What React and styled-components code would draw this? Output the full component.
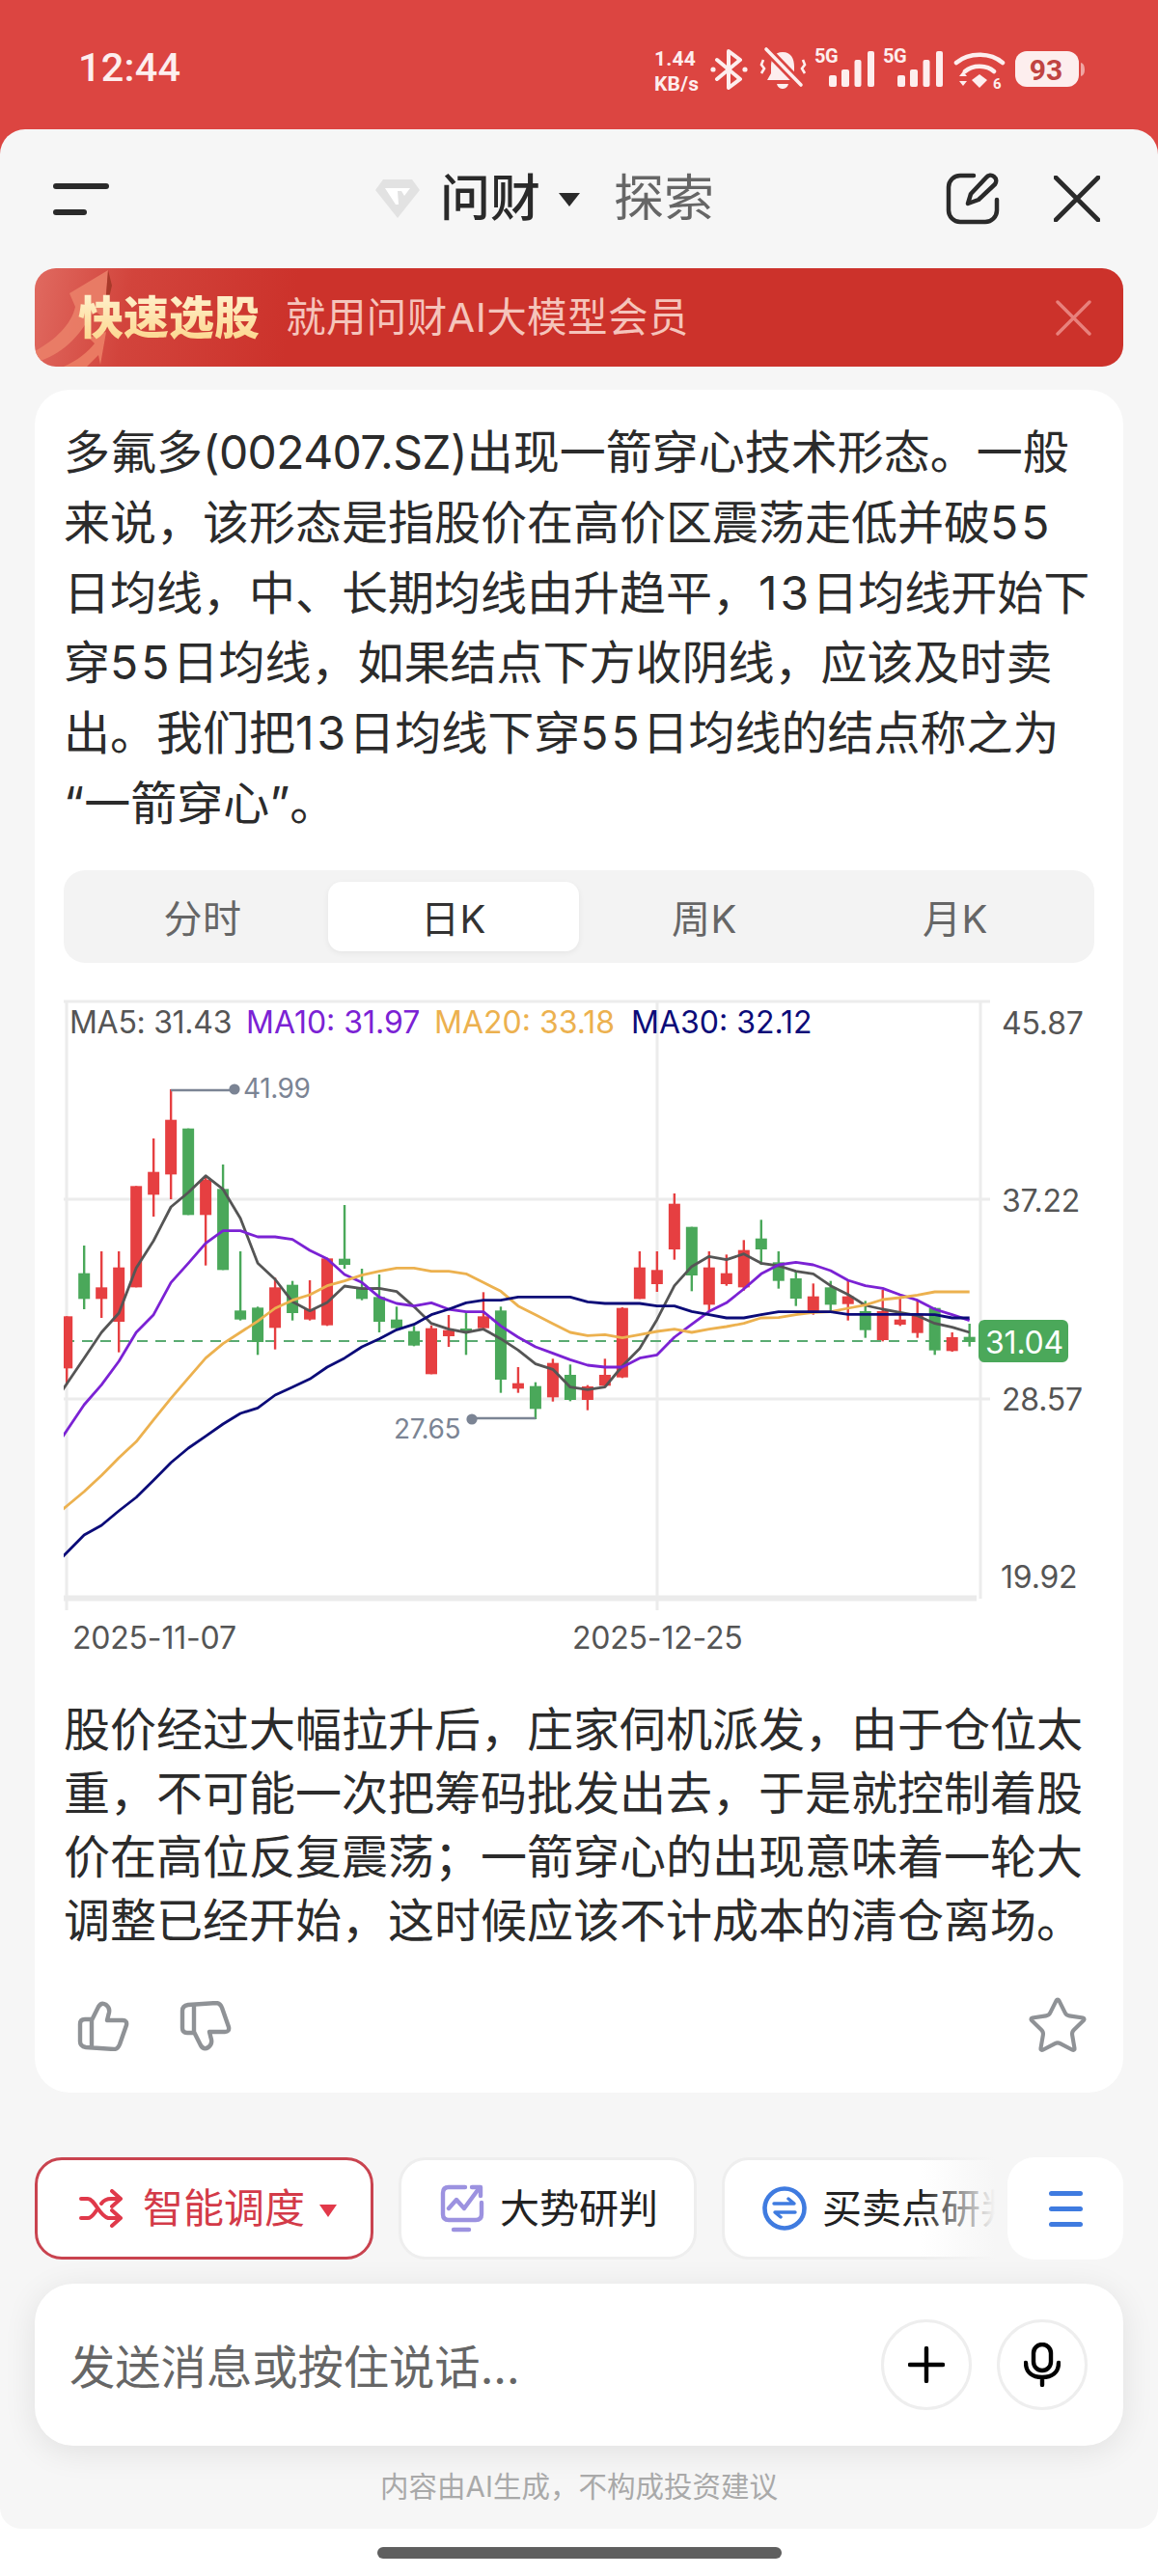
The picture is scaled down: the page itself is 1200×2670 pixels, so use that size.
import React from 'react';
import styled, { createGlobalStyle } from 'styled-components';
import { Star } from 'lucide-react';

const FONT = `Inter, "Noto Sans CJK SC", "Noto Sans", sans-serif`;

const Global = createGlobalStyle`
  html, body { margin: 0; padding: 0; background: #fff; }
  body { font-family: ${FONT}; width: 1200px; height: 2670px; overflow: hidden; }
  * { box-sizing: border-box; }
`;

const Page = styled.div`
  position: relative; width: 1200px; height: 2670px; background: #fff; display: flex; flex-direction: column; overflow: hidden;
`;
const StatusBar = styled.div`
  position: absolute; top: 0; left: 0; width: 1200px; height: 170px; background: #dc4541;
  display: flex; justify-content: space-between; padding: 50px 75px 0 81px; color: #fdeeee;
`;
const Time = styled.div`
  font: 500 41.5px/40px Roboto, sans-serif; letter-spacing: 0.2px;
`;
const StatusRight = styled.div`
  display: flex; align-items: flex-start; height: 44px;
`;
const Speed = styled.div`
  width: 58px; font: 700 21px/26px Roboto, sans-serif; white-space: nowrap; margin-top: -2px; letter-spacing: 0.2px;
`;
const StatusIcon = styled.svg`
  display: block; flex: none; margin-left: ${p => p.$ml || 0}px; overflow: visible;
`;
const Sheet = styled.div`
  position: relative; margin-top: 134px; height: 2487px; background: #f6f6f6; border-radius: 26px 26px 22px 22px;
  display: flex; flex-direction: column; overflow: hidden;
`;
const Header = styled.div`
  height: 144px; flex: none; display: flex; align-items: center; padding: 0 60px 0 55px;
`;
const Burger = styled.div`
  width: 334px; display: flex; flex-direction: column; gap: 21px;
`;
const BurgerBar = styled.span`
  display: block; height: 6px; border-radius: 3px; background: #2a2a2a; width: ${p => p.$w}px;
`;
const Brand = styled.div`
  display: flex; align-items: center;
`;
const BrandName = styled.span`
  font-size: 52px; line-height: 60px; font-weight: 500; color: #2a2a2a; margin-left: 21px;
`;
const BrandCaret = styled.span`
  width: 0; height: 0; margin: 2px 0 0 19px; border-left: 11px solid transparent; border-right: 11px solid transparent; border-top: 14px solid #2a2a2a;
`;
const Explore = styled.span`
  font-size: 52px; line-height: 60px; color: #666; margin-left: 35px;
`;
const HeaderActions = styled.div`
  margin-left: auto; display: flex; align-items: center; gap: 56px;
`;
const Banner = styled.div`
  position: relative; flex: none; margin: 0 36px; height: 102px; border-radius: 22px; overflow: hidden;
  display: flex; align-items: center; padding: 0 33px 0 45px;
  background: linear-gradient(100deg, #e06a60 0, #d2443c 9%, #cc322b 24%, #cc322b 100%);
`;
const BannerArt = styled.svg`
  position: absolute; left: 0; top: 0;
`;
const BannerTitle = styled.span`
  position: relative; font-size: 47px; line-height: 60px; font-weight: 900;
  background: linear-gradient(180deg, #fff3d2, #fcd488); -webkit-background-clip: text; background-clip: text; color: transparent;
`;
const BannerText = styled.span`
  position: relative; font-size: 41.5px; line-height: 60px; color: #f5c4bb; margin-left: 27px; letter-spacing: 0.4px;
`;
const BannerClose = styled.svg`
  margin-left: auto; display: block;
`;
const Card = styled.div`
  flex: none; margin: 24px 36px 0; height: 1765px; background: #fff; border-radius: 36px; padding: 29px 30px 0;
  display: flex; flex-direction: column;
`;
const Para = styled.div`
  font-size: 48px; line-height: ${p => p.$lh}px; color: #2b2b2b; margin-top: ${p => p.$mt || 0}px;
`;
const Line = styled.span`
  display: block; white-space: nowrap;
`;
const Num = styled.span`
  letter-spacing: ${p => p.$ls ?? 3}px;
`;
const Tabs = styled.div`
  margin-top: 32px; height: 96px; flex: none; width: 1068px; background: #f3f3f3; border-radius: 22px; padding: 12px 14px;
  display: grid; grid-template-columns: repeat(4, 1fr);
`;
const Tab = styled.div`
  display: flex; align-items: center; justify-content: center; border-radius: 14px;
  font-size: 40px; letter-spacing: 0.6px; color: ${p => (p.$active ? '#333' : '#666')};
  background: ${p => (p.$active ? '#fff' : 'transparent')};
  box-shadow: ${p => (p.$active ? '0 2px 6px rgba(0,0,0,.06)' : 'none')};
`;
const ChartSvg = styled.svg`
  display: block; flex: none; margin-left: -30px; width: 1128px; height: 722px;
`;
const ChartText = styled.text`
  font-family: Inter, sans-serif; font-size: ${p => p.$size || 32}px; fill: ${p => p.$fill || '#555'};
  letter-spacing: ${p => p.$ls || 0}px;
`;
const Actions = styled.div`
  margin-top: 48px; display: flex; align-items: center; gap: 52px; padding: 0 5px 0 14px; height: 56px;
`;
const ActionSpacer = styled.div`
  flex: 1;
`;
const ChipRow = styled.div`
  flex: none; position: relative; margin: 67px 36px 0; height: 106px; display: flex;
`;
const Scroller = styled.div`
  position: relative; flex: 1; min-width: 0; display: flex; gap: 26px; overflow: hidden;
  &::after {
    content: ''; position: absolute; right: 0; top: 0; bottom: 0; width: 90px;
    background: linear-gradient(90deg, rgba(246,246,246,0), #f6f6f6 86%);
  }
`;
const Chip = styled.div`
  flex: none; height: 106px; border-radius: 28px; background: #fff; display: flex; align-items: center;
  border: 3px solid ${p => (p.$active ? '#c9434f' : '#eeeeee')};
  width: ${p => p.$w}px; padding-left: ${p => p.$pl}px;
`;
const ChipText = styled.span`
  font-size: ${p => (p.$active ? 42 : 41)}px; line-height: 50px; white-space: nowrap; margin-left: ${p => p.$ml}px; color: ${p => (p.$active ? '#d33a48' : '#222')};
`;
const ChipCaret = styled.span`
  width: 0; height: 0; margin: 4px 0 0 15px; border-left: 9px solid transparent; border-right: 9px solid transparent; border-top: 13px solid #e2394a;
`;
const MenuChip = styled.div`
  flex: none; width: 120px; height: 106px; border-radius: 28px; background: #fff; display: flex; flex-direction: column;
  align-items: center; justify-content: center; gap: 11px;
`;
const MenuBar = styled.span`
  display: block; width: 35px; height: 5px; border-radius: 3px; background: #3f7be0;
`;
const InputBox = styled.div`
  flex: none; margin: 25px 36px 0; height: 168px; border-radius: 40px; background: #fff;
  box-shadow: 0 6px 34px rgba(0,0,0,.09); display: flex; align-items: center; padding: 0 37px 2px 36px;
`;
const Placeholder = styled.span`
  font-size: 47.3px; color: #666; flex: 1;
`;
const RoundButton = styled.div`
  width: 94px; height: 94px; border-radius: 50%; border: 3px solid #eee; display: flex; align-items: center; justify-content: center;
  margin-left: ${p => p.$ml || 0}px; margin-top: 2px; background: #fff;
`;
const Disclaimer = styled.div`
  flex: none; position: relative; margin-top: 22px; text-align: center; font-size: 29.5px; line-height: 40px; color: #a9a9a9;
`;
const HomeArea = styled.div`
  flex: 1; display: flex; justify-content: center; padding-top: 19px;
`;
const HomeBar = styled.div`
  width: 419px; height: 12px; border-radius: 6px; background: #5f5f5f;
`;

const para2 = [
  '股价经过大幅拉升后，庄家伺机派发，由于仓位太',
  '重，不可能一次把筹码批发出去，于是就控制着股',
  '价在高位反复震荡；一箭穿心的出现意味着一轮大',
  '调整已经开始，这时候应该不计成本的清仓离场。',
];

// candle: [wickTop, bodyTop, bodyBottom, wickBottom, up?] in zoomed y units
const K = [
  [1090,1090,1252,1300,1],[870,956,1036,1068,0],[888,1000,1036,1095,1],[888,938,1107,1202,1],[685,685,1000,1000,1],
  [537,641,712,780,1],[384,479,649,726,1],[506,506,775,775,0],[655,665,775,932,1],[618,694,946,946,0],
  [888,1072,1100,1103,0],[1060,1063,1170,1210,0],[970,1000,1126,1193,1],[980,992,1080,1103,0],[978,1068,1100,1103,1],
  [908,910,1118,1120,1],[744,911,930,942,0],[942,1000,1036,1040,0],[960,1030,1107,1140,0],[1060,1100,1127,1127,0],
  [1120,1136,1181,1183,0],[1118,1127,1270,1270,1],[1086,1133,1152,1185,1],[1078,1128,1140,1210,0],[1015,1090,1127,1127,1],
  [1060,1072,1287,1328,0],[1248,1298,1315,1328,1],[1295,1307,1378,1410,0],[1222,1235,1342,1355,1],[1240,1272,1350,1354,0],
  [1304,1308,1350,1382,1],[1222,1272,1306,1310,1],[1062,1064,1280,1282,1],[888,938,1036,1036,1],[888,946,990,1014,1],
  [708,740,882,914,1],[812,812,963,1012,0],[888,938,1054,1075,1],[898,956,990,995,1],[853,884,1000,1010,1],
  [790,848,882,930,0],[888,922,980,1004,0],[948,972,1035,1058,0],[988,1028,1078,1085,1],[980,1000,1054,1074,0],
  [980,1028,1052,1103,1],[1042,1074,1133,1157,0],[1008,1074,1164,1168,1],[1028,1100,1116,1120,1],[1040,1084,1142,1157,1],
  [1062,1064,1196,1210,0],[1140,1155,1198,1200,1],[1113,1154,1170,1184,0],
];
const MA5 = [1300,1220,1140,1080,940,855,750,705,653,695,785,925,975,1045,1073,1047,996,1004,1003,1013,1060,1112,1130,1140,1130,1160,1195,1238,1255,1310,1318,1310,1245,1190,1100,995,935,904,914,896,925,933,950,958,995,1022,1056,1068,1078,1088,1112,1124,1140];
const MA10 = [1445,1365,1303,1230,1140,1085,985,925,863,824,824,843,843,851,885,911,960,985,1030,1050,1058,1048,1068,1076,1076,1120,1155,1185,1205,1225,1242,1248,1248,1220,1210,1155,1115,1075,1048,1005,958,930,922,930,948,978,995,1003,1023,1040,1068,1085,1103];
const MA20 = [1680,1635,1585,1530,1480,1412,1345,1282,1220,1175,1140,1105,1065,1040,1023,995,980,962,950,940,940,950,950,958,985,1012,1058,1085,1113,1140,1150,1147,1157,1147,1137,1130,1140,1130,1122,1112,1095,1094,1085,1078,1076,1065,1055,1038,1032,1024,1014,1014,1014];
const MA30 = [1825,1770,1740,1695,1653,1600,1545,1500,1463,1425,1392,1375,1335,1310,1285,1248,1220,1185,1160,1132,1115,1085,1068,1048,1040,1040,1030,1030,1030,1030,1045,1050,1050,1050,1058,1058,1075,1085,1095,1095,1085,1076,1076,1076,1076,1084,1084,1084,1084,1084,1085,1095,1095];

const cx = i => 69.2 + 17.99 * i;
const cy = v => 1000 + v / 3;
const RED = '#e63f41';
const GREEN = '#4aa85a';
const pts = a => [`${cx(-1)},${cy(a[0] + (a[0] - a[1]))}`, ...a.map((v, i) => `${cx(i)},${cy(v)}`)].join(' ');

const Chart = () => (
  <ChartSvg viewBox="36 997 1128 722">
    <defs>
      <clipPath id="plot"><rect x="66" y="1036" width="950" height="620" /></clipPath>
    </defs>
    <g stroke="#ececec" strokeWidth="3" fill="none">
      <path d="M66 1037H1026M66 1242H1026M66 1449H1026" />
      <path d="M69 1036V1668M681 1036V1668M1016 1036V1656" />
    </g>
    <path d="M66 1655.5H1012" stroke="#ebebeb" strokeWidth="6" />
    <path d="M66 1389H1016" stroke="#5aab72" strokeWidth="1.8" strokeDasharray="11 8" />
    <g clipPath="url(#plot)">
      {K.map((k, i) => (
        <g key={i} fill={k[4] ? RED : GREEN}>
          <rect x={cx(i) - 1.2} y={cy(k[0])} width="2.4" height={(k[3] - k[0]) / 3} />
          <rect x={cx(i) - 6} y={cy(k[1])} width="12" height={(k[2] - k[1]) / 3} />
        </g>
      ))}
      <polyline points={pts(MA5)} fill="none" stroke="#555" strokeWidth="2.8" strokeLinejoin="round" />
      <polyline points={pts(MA10)} fill="none" stroke="#7b22d4" strokeWidth="2.8" strokeLinejoin="round" />
      <polyline points={pts(MA20)} fill="none" stroke="#ecb14f" strokeWidth="2.8" strokeLinejoin="round" />
      <polyline points={pts(MA30)} fill="none" stroke="#0b0b78" strokeWidth="2.8" strokeLinejoin="round" />
    </g>
    <path d="M177 1129H243" stroke="#7b8494" strokeWidth="2.4" />
    <circle cx="243" cy="1128" r="5.6" fill="#7b8494" />
    <ChartText x="252" y="1137" $size={28} $fill="#7b8494" $ls={-0.4}>41.99</ChartText>
    <path d="M555 1469H489" stroke="#7b8494" strokeWidth="2.4" />
    <circle cx="489" cy="1470" r="5.6" fill="#7b8494" />
    <ChartText x="408" y="1490" $size={28} $fill="#7b8494" $ls={-0.4}>27.65</ChartText>
    <ChartText x="72" y="1070" $ls={-0.3}>MA5: 31.43</ChartText>
    <ChartText x="255" y="1070" $fill="#7b22d4">MA10: 31.97</ChartText>
    <ChartText x="450" y="1070" $fill="#ecb14f">MA20: 33.18</ChartText>
    <ChartText x="654" y="1070" $fill="#0b0b78">MA30: 32.12</ChartText>
    <ChartText x="1038" y="1071" $ls={-0.2}>45.87</ChartText>
    <ChartText x="1038" y="1255" $ls={-0.2}>37.22</ChartText>
    <ChartText x="1038" y="1461" $ls={-0.2}>28.57</ChartText>
    <ChartText x="1037" y="1645" $ls={-0.2}>19.92</ChartText>
    <rect x="1014" y="1367" width="93" height="44" rx="6" fill="#4ba85a" />
    <ChartText x="1021" y="1402" $size={32} $fill="#fff" $ls={-0.2}>31.04</ChartText>
    <ChartText x="75" y="1708" $ls={-0.2}>2025-11-07</ChartText>
    <ChartText x="593" y="1708" $ls={-0.2}>2025-12-25</ChartText>
  </ChartSvg>
);

const Signal = () => (
  <StatusIcon width="62" height="44" viewBox="0 0 62 44" $ml={9}>
    <text x="0" y="15" fontFamily="Roboto, sans-serif" fontWeight="700" fontSize="20" fill="#fdeeee" letterSpacing="-0.5">5G</text>
    <g fill="#fdeeee">
      <rect x="15" y="28" width="8" height="12" rx="2" />
      <rect x="28" y="22" width="8" height="18" rx="2" />
      <rect x="41.5" y="12" width="7" height="28" rx="2" />
      <rect x="55" y="3" width="7" height="37" rx="2" />
    </g>
  </StatusIcon>
);

const Thumb = ({ down }) => (
  <svg width="54" height="52" viewBox="0 0 54 52" fill="none" stroke="#8f9296" strokeWidth="4.4" strokeLinejoin="round" strokeLinecap="round">
    <g transform={down ? 'translate(0 52) scale(1 -1)' : undefined}>
      <path d="M15 20L22 6Q25 1 30 4Q34 7 33 12L31 20H47Q52 20 51 25L44 45Q42 50 38 50L9 48Q3 47 3 42V24Q3 19 8 19H15V48" />
    </g>
  </svg>
);

export default function App() {
  return (
    <Page>
      <Global />
      <StatusBar>
        <Time>12:44</Time>
        <StatusRight>
          <Speed>1.44<br />KB/s</Speed>
          <StatusIcon width="39" height="44" viewBox="0 0 39 44" fill="none" stroke="#fdeeee" strokeWidth="4" strokeLinejoin="round" strokeLinecap="round">
            <path d="M7 12L31 32L19 41V3L31 12L7 32" />
            <circle cx="3" cy="22" r="2.6" fill="#fdeeee" stroke="none" />
            <circle cx="36" cy="22" r="2.6" fill="#fdeeee" stroke="none" />
          </StatusIcon>
          <StatusIcon width="47" height="44" viewBox="0 0 47 44" $ml={13}>
            <path d="M23 4C32 4 35 11 35 19V26L39 33H7L11 26V19C11 11 14 4 23 4Z" fill="#fdeeee" />
            <path d="M17 37H29C28 41 25 42 23 42C21 42 18 41 17 37Z" fill="#fdeeee" />
            <path d="M6 1L42 38" stroke="#dc4541" strokeWidth="9" />
            <path d="M6 1L42 38" stroke="#fdeeee" strokeWidth="3.6" strokeLinecap="round" />
            <path d="M3 12L1 17L4 21L1 26M44 12L46 17L43 21L46 26" fill="none" stroke="#fdeeee" strokeWidth="2.6" />
          </StatusIcon>
          <Signal />
          <Signal />
          <StatusIcon width="50" height="44" viewBox="0 0 50 44" $ml={13} fill="none" stroke="#fdeeee" strokeLinecap="round">
            <path d="M1 15C14 4 36 4 49 15" strokeWidth="4.5" />
            <path d="M10 24C18 17 32 17 40 24" strokeWidth="4.5" />
            <path d="M17 33L25 27L33 33L25 41Z" fill="#fdeeee" stroke="none" />
            <path d="M4 29L8 24L12 29ZM4 34L8 39L12 34Z" fill="#fdeeee" stroke="none" />
            <text x="39" y="42" fontFamily="Roboto, sans-serif" fontWeight="700" fontSize="15" fill="#fdeeee" stroke="none">6</text>
          </StatusIcon>
          <StatusIcon width="73" height="44" viewBox="0 0 73 44" $ml={12}>
            <rect x="0" y="3" width="66" height="37" rx="12" fill="#fdeeee" />
            <path d="M68 15Q72 16 72 22Q72 28 68 29Z" fill="#f0a5a2" />
            <text x="32" y="33" textAnchor="middle" fontFamily="Roboto, sans-serif" fontWeight="700" fontSize="30" fill="#c04442">93</text>
          </StatusIcon>
        </StatusRight>
      </StatusBar>

      <Sheet>
        <Header>
          <Burger>
            <BurgerBar $w={58} />
            <BurgerBar $w={35} />
          </Burger>
          <Brand>
            <svg width="46" height="40" viewBox="0 0 46 40">
              <path d="M8 0H38L46 11L23 40L0 11Z" fill="#e2e2e2" />
              <path d="M10 9H36L30 17L27 12H23L24 26H21Z" fill="#fff" />
            </svg>
            <BrandName>问财</BrandName>
            <BrandCaret />
            <Explore>探索</Explore>
          </Brand>
          <HeaderActions>
            <svg width="56" height="56" viewBox="0 0 56 56" fill="none" stroke="#2a2a2a" strokeWidth="4.5" strokeLinecap="round" strokeLinejoin="round">
              <path d="M29 4H15A12 12 0 0 0 3 16V40A12 12 0 0 0 15 52H41A12 12 0 0 0 53 40V29" />
              <path d="M23 33L26 23L42 6A5.5 5.5 0 0 1 51 13L34 29Z" />
            </svg>
            <svg width="48" height="48" viewBox="0 0 48 48" fill="none" stroke="#2a2a2a" strokeWidth="4.8" strokeLinecap="round">
              <path d="M2 2L46 46M46 2L2 46" />
            </svg>
          </HeaderActions>
        </Header>

        <Banner>
          <BannerArt width="130" height="102" viewBox="0 0 130 102">
            <path d="M0 86C22 74 38 58 42 40L36 26L76 2L72 52L60 42C52 66 30 88 6 96Z" fill="#ea8068" opacity=".9" />
            <path d="M76 2L72 52L80 18Z" fill="#a83a2a" />
            <path d="M30 102C44 96 56 86 62 78L56 72L74 66L68 100L66 90C62 94 58 98 54 102Z" fill="#ea7a62" />
          </BannerArt>
          <BannerTitle>快速选股</BannerTitle>
          <BannerText>就用问财AI大模型会员</BannerText>
          <BannerClose width="37" height="37" viewBox="0 0 37 37" fill="none" stroke="#e8817c" strokeWidth="3.4" strokeLinecap="round">
            <path d="M2 2L35 35M35 2L2 35" />
          </BannerClose>
        </Banner>

        <Card>
          <Para $lh={72.8}>
            <Line>多氟多<Num $ls={-0.6}>(002407.SZ)</Num>出现一箭穿心技术形态。一般</Line>
            <Line>来说，该形态是指股价在高价区震荡走低并破<Num>55</Num></Line>
            <Line>日均线，中、长期均线由升趋平，<Num>13</Num>日均线开始下</Line>
            <Line>穿<Num>55</Num>日均线，如果结点下方收阴线，应该及时卖</Line>
            <Line>出。我们把<Num>13</Num>日均线下穿<Num>55</Num>日均线的结点称之为</Line>
            <Line>“一箭穿心”。</Line>
          </Para>
          <Tabs>
            <Tab>分时</Tab>
            <Tab $active>日K</Tab>
            <Tab>周K</Tab>
            <Tab>月K</Tab>
          </Tabs>
          <Chart />
          <Para $lh={66} $mt={40}>{para2.map(l => <Line key={l}>{l}</Line>)}</Para>
          <Actions>
            <Thumb />
            <Thumb down />
            <ActionSpacer />
            <Star size={66} color="#8f9296" strokeWidth={1.5} />
          </Actions>
        </Card>

        <ChipRow>
          <Scroller>
            <Chip $active $w={351} $pl={43}>
              <svg width="46" height="40" viewBox="0 0 46 40" fill="none" stroke="#e0394a" strokeWidth="4" strokeLinecap="round" strokeLinejoin="round">
                <path d="M2 10H9C16 10 21 28 30 30H43M34 22L43 30L34 38" />
                <path d="M2 30H9C13 30 15 26 18 22M23 15C26 11 29 10 33 10H43M34 2L43 10L34 18" />
              </svg>
              <ChipText $active $ml={20}>智能调度</ChipText>
              <ChipCaret />
            </Chip>
            <Chip $w={309} $pl={40}>
              <svg width="46" height="52" viewBox="0 0 46 52" fill="none" stroke="#9c92e0" strokeWidth="4.4" strokeLinecap="round" strokeLinejoin="round">
                <path d="M26 4H9Q3 4 3 10V32Q3 38 9 38H37Q43 38 43 32V20" />
                <path d="M9 26L17 17L25 26L39 7" />
                <path d="M33 4H42V13" />
                <path d="M14 48H30" />
              </svg>
              <ChipText $ml={16}>大势研判</ChipText>
            </Chip>
            <Chip $w={340} $pl={39}>
              <svg width="46" height="46" viewBox="0 0 46 46" fill="none" stroke="#3f7be0" strokeLinecap="round" strokeLinejoin="round">
                <circle cx="23" cy="23" r="20.5" strokeWidth="4.6" />
                <path d="M12 18H33L27 13M34 27H13L19 32" strokeWidth="3.4" />
              </svg>
              <ChipText $ml={16}>买卖点研判</ChipText>
            </Chip>
          </Scroller>
          <MenuChip>
            <MenuBar /><MenuBar /><MenuBar />
          </MenuChip>
        </ChipRow>

        <InputBox>
          <Placeholder>发送消息或按住说话...</Placeholder>
          <RoundButton>
            <svg width="38" height="38" viewBox="0 0 38 38" fill="none" stroke="#000" strokeWidth="4.4" strokeLinecap="round">
              <path d="M19 2V36M2 19H36" />
            </svg>
          </RoundButton>
          <RoundButton $ml={26}>
            <svg width="38" height="46" viewBox="0 0 38 46" fill="none" stroke="#000" strokeWidth="4.4" strokeLinecap="round">
              <rect x="10" y="2" width="18" height="27" rx="9" />
              <path d="M2 21C2 31 9 36 19 36C29 36 36 31 36 21M19 36V44" />
            </svg>
          </RoundButton>
        </InputBox>

        <Disclaimer>内容由AI生成，不构成投资建议</Disclaimer>
      </Sheet>
      <HomeArea><HomeBar /></HomeArea>
    </Page>
  );
}
